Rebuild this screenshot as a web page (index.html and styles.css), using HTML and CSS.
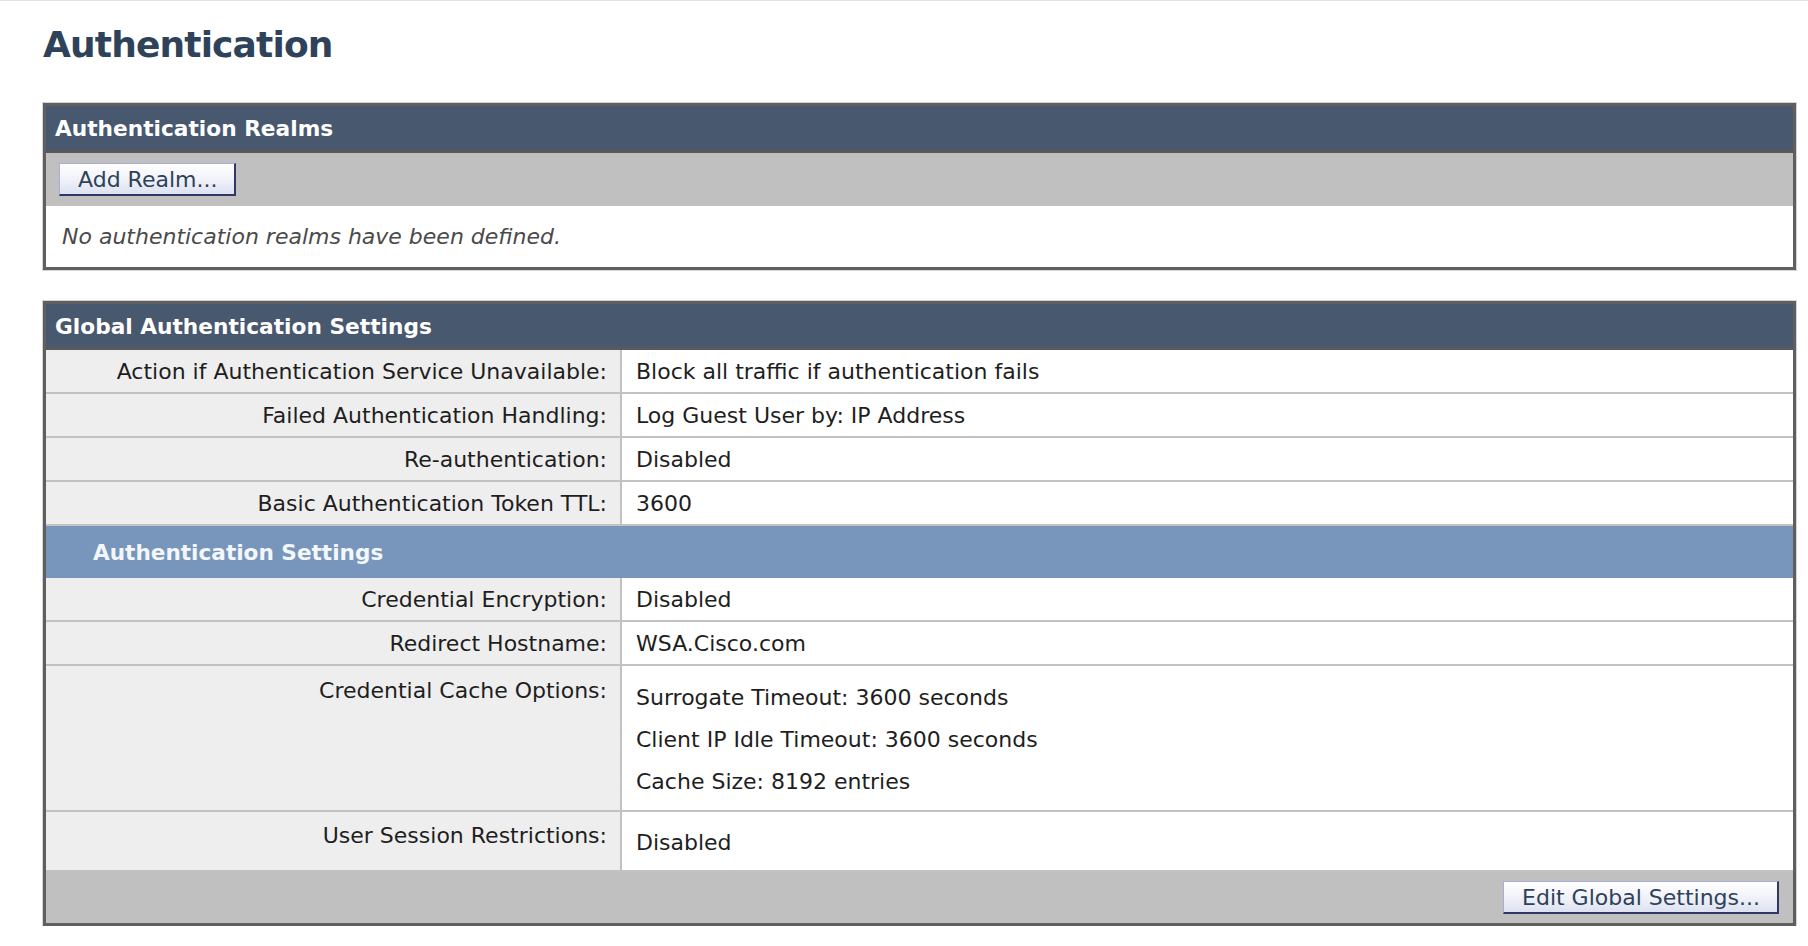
FILE: index.html
```html
<!DOCTYPE html>
<html lang="en">
<head>
<meta charset="utf-8">
<title>Authentication</title>
<link rel="stylesheet" href="styles.css">
</head>
<body>
<div class="page">
  <h1 class="page-title">Authentication</h1>

  <section class="box box-realms">
    <h2 class="box-head">Authentication Realms</h2>
    <div class="toolbar">
      <button class="btn" type="button">Add Realm...</button>
    </div>
    <div class="empty">No authentication realms have been defined.</div>
  </section>

  <section class="box box-global">
    <h2 class="box-head">Global Authentication Settings</h2>
    <div class="settings">
      <div class="row">
        <div class="label">Action if Authentication Service Unavailable:</div>
        <div class="value">Block all traffic if authentication fails</div>
      </div>
      <div class="row">
        <div class="label">Failed Authentication Handling:</div>
        <div class="value">Log Guest User by: IP Address</div>
      </div>
      <div class="row">
        <div class="label">Re-authentication:</div>
        <div class="value">Disabled</div>
      </div>
      <div class="row">
        <div class="label">Basic Authentication Token TTL:</div>
        <div class="value">3600</div>
      </div>
      <div class="subhead">Authentication Settings</div>
      <div class="row">
        <div class="label">Credential Encryption:</div>
        <div class="value">Disabled</div>
      </div>
      <div class="row">
        <div class="label">Redirect Hostname:</div>
        <div class="value">WSA.Cisco.com</div>
      </div>
      <div class="row">
        <div class="label label-top">Credential Cache Options:</div>
        <div class="value value-lines value-cache">
          <div class="line">Surrogate Timeout: 3600 seconds</div>
          <div class="line">Client IP Idle Timeout: 3600 seconds</div>
          <div class="line">Cache Size: 8192 entries</div>
        </div>
      </div>
      <div class="row">
        <div class="label label-top label-session">User Session Restrictions:</div>
        <div class="value value-lines value-session">
          <div class="line">Disabled</div>
        </div>
      </div>
    </div>
    <div class="footer">
      <button class="btn" type="button">Edit Global Settings...</button>
    </div>
  </section>
</div>
</body>
</html>
```

FILE: styles.css
```css
html, body {
  margin: 0;
  padding: 0;
  background: #ffffff;
}

body {
  border-top: 1px solid #e2e2e2;
  font-family: "DejaVu Sans", Verdana, sans-serif;
  font-size: 22px;
  color: #1e1e1e;
}

.page {
  padding: 23px 12px 0 43px;
}

.page-title {
  margin: 0;
  font-size: 36px;
  line-height: 42px;
  font-weight: bold;
  letter-spacing: -0.85px;
  color: #2e4259;
}

.box {
  border: 3px solid #5f5f5f;
  box-shadow: 0 0 0 1px #d4d4d4;
  background: #ffffff;
}

.box-realms {
  margin-top: 37px;
}

.box-global {
  margin-top: 31px;
}

.box-head {
  margin: 0;
  height: 44px;
  line-height: 44px;
  padding-left: 9px;
  padding-top: 1px;
  box-sizing: border-box;
  height: 47px;
  background: #48586f;
  color: #ffffff;
  font-size: 21.7px;
  font-weight: bold;
  border-bottom: 3px solid #595959;
}

.box-global .box-head {
  height: 46px;
  line-height: 43px;
}

.toolbar {
  display: flex;
  background: #c0c0c0;
  padding: 10px 13px;
}

.btn {
  height: 33px;
  margin: 0;
  padding: 0 17px 0 18px;
  font-family: "DejaVu Sans", Verdana, sans-serif;
  font-size: 22px;
  line-height: 29px;
  color: #2e4259;
  background: linear-gradient(#ffffff 0%, #f3f4fa 45%, #dde1f1 100%);
  border-style: solid;
  border-width: 1px 2px 2px 1px;
  border-color: #a9aed4 #2f3766 #2f3766 #a9aed4;
  border-radius: 0;
  cursor: pointer;
}

.empty {
  height: 61px;
  line-height: 61px;
  padding-left: 16px;
  font-style: italic;
  color: #4a4a4a;
}

.settings {
  display: flex;
  flex-direction: column;
}

.row {
  display: grid;
  grid-template-columns: 576px 1fr;
  border-bottom: 2px solid #c2c2c2;
}

.label {
  background: #eeeeee;
  border-right: 2px solid #c2c2c2;
  text-align: right;
  padding-right: 13px;
  padding-top: 2px;
  line-height: 40px;
}

.value {
  background: #ffffff;
  padding: 2px 14px 0 14px;
  line-height: 40px;
}

.label-top {
  padding-top: 11px;
  line-height: 27px;
}

.label-session {
  padding-top: 10px;
}

.value-cache {
  padding-top: 11px;
  padding-bottom: 7px;
}

.value-session {
  padding-top: 10px;
  padding-bottom: 6px;
}

.line {
  line-height: 42px;
}

.subhead {
  height: 52px;
  line-height: 53px;
  padding-left: 47px;
  background: #7896bb;
  color: #f3f6fa;
  font-size: 21.6px;
  font-weight: bold;
}

.footer {
  display: flex;
  justify-content: flex-end;
  background: #c0c0c0;
  padding: 9px 14px 9px 14px;
}
```
